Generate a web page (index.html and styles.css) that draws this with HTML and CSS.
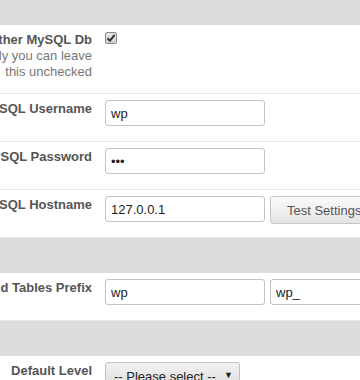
FILE: index.html
```html
<!DOCTYPE html>
<html lang="en">
<head>
  <meta charset="UTF-8" />
  <meta name="viewport" content="width=device-width, initial-scale=1.0"/>
  <title>Plugin Settings</title>

  <link rel="stylesheet" href="styles.css">
</head>
<body>

  <div class="settings">
    <div class="band band-top"></div>

    <div class="row">
      <div class="label">
        Use another MySQL Db
        <div class="desc">Usually you can leave<br>this unchecked</div>
      </div>
      <div class="field">
        <span class="checkbox">
          <svg width="10" height="10" viewBox="0 0 10 10">
            <path d="M1.5 5.2 L4 7.8 L8.6 1.8" fill="none" stroke="#333" stroke-width="2"/>
          </svg>
        </span>
      </div>
    </div>

    <div class="row">
      <div class="label">MySQL Username</div>
      <div class="field">
        <input type="text" value="wp" />
      </div>
    </div>

    <div class="row">
      <div class="label">MySQL Password</div>
      <div class="field">
        <input type="password" value="abc" />
      </div>
    </div>

    <div class="row">
      <div class="label">MySQL Hostname</div>
      <div class="field">
        <input type="text" value="127.0.0.1" />
        <button type="button">Test Settings</button>
      </div>
    </div>

    <div class="band"></div>

    <div class="row">
      <div class="label">Database and Tables Prefix</div>
      <div class="field">
        <input type="text" value="wp" />
        <input type="text" value="wp_" />
      </div>
    </div>

    <div class="band"></div>

    <div class="row">
      <div class="label">Default Level</div>
      <div class="field">
        <div class="select-wrap">
          <select>
            <option>-- Please select --</option>
          </select>
          <span class="arrow">▼</span>
        </div>
      </div>
    </div>
  </div>

</body>
</html>
```

FILE: styles.css
```css
html, body {
  overflow: hidden;
}

body {
  margin: 0;
  padding: 0;
  background-color: #ffffff;
  color: #333;
  font-family: 'Liberation Sans', Arial, Helvetica, sans-serif;
}

.settings {
  margin-left: -108px;
  width: 560px;
}

.band {
  height: 35px;
  background-color: #dddddd;
}

.band-top {
  height: 25px;
}

.row {
  display: grid;
  grid-template-columns: 200px 1fr;
  column-gap: 13px;
  padding: 6px 0;
  border-bottom: 1px solid #e8e8e8;
}

.label {
  text-align: right;
  padding: 1px 0 7px;
  font-size: 13px;
  line-height: 16px;
  font-weight: bold;
  color: #555;
}

.desc {
  font-size: 13px;
  font-weight: normal;
  color: #777;
}

.field {
  display: flex;
  align-items: flex-start;
  gap: 5px;
  padding-bottom: 9px;
}

.checkbox {
  box-sizing: border-box;
  width: 12px;
  height: 12px;
  margin-top: 1px;
  display: flex;
  align-items: center;
  justify-content: center;
  background: linear-gradient(#e6e6e6, #d2d2d2);
  border: 1px solid #8c8c8c;
  border-radius: 2px;
}

input {
  box-sizing: border-box;
  width: 160px;
  height: 26px;
  margin: 0;
  padding: 0 5px;
  border: 1px solid #c4c4c4;
  border-radius: 3px;
  font-family: inherit;
  font-size: 13px;
  color: #222;
}

button {
  box-sizing: border-box;
  height: 28px;
  margin: 0 0 -2px;
  padding: 0 16px;
  border: 1px solid #c6c6c6;
  border-radius: 3px;
  background: linear-gradient(#fbfbfb, #e4e4e4);
  font-family: inherit;
  font-size: 13px;
  color: #555;
  white-space: nowrap;
}

.select-wrap {
  position: relative;
}

select {
  box-sizing: border-box;
  width: 135px;
  height: 28px;
  margin: 0;
  padding: 0 8px;
  -webkit-appearance: none;
  appearance: none;
  border: 1px solid #c2c2c2;
  border-radius: 3px;
  background: linear-gradient(#f2f2f2, #dcdcdc);
  font-family: inherit;
  font-size: 13px;
  color: #222;
}

.arrow {
  position: absolute;
  top: 8px;
  right: 7px;
  font-size: 9px;
  color: #222;
  pointer-events: none;
}
```
